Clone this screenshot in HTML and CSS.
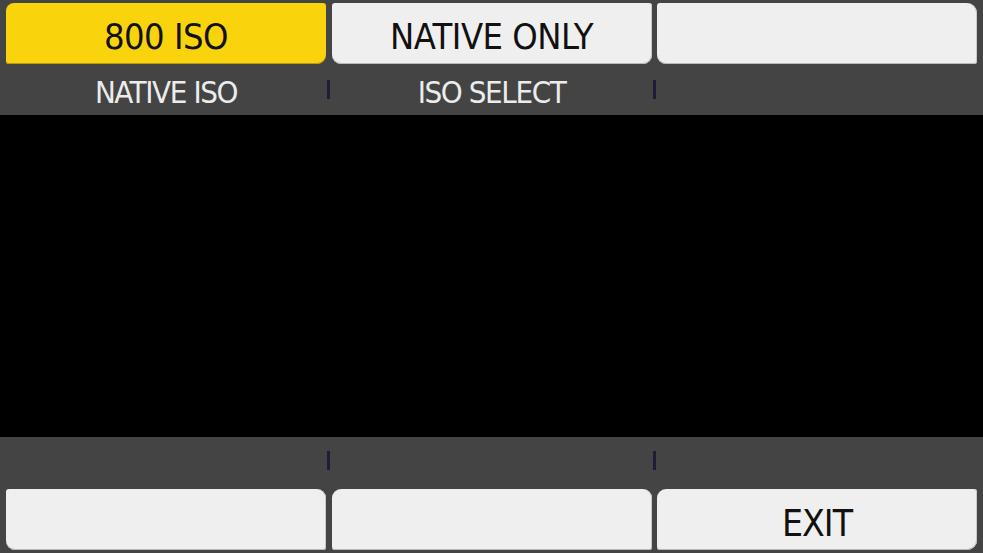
FILE: index.html
```html
<!DOCTYPE html>
<html lang="en">
  <head>
    <meta charset="UTF-8" />
    <meta name="viewport" content="width=device-width, initial-scale=1.0" />
    <title>ISO Select</title>
    <link rel="stylesheet" href="styles.css">
  </head>
  <body>
    <div class="screen">
      <!-- Top soft keys -->
      <div class="key-row top-row">
        <div class="key key-active">800 ISO</div>
        <div class="key">NATIVE ONLY</div>
        <div class="key"></div>
      </div>

      <!-- Key captions -->
      <div class="label-row">
        <div class="label">NATIVE ISO</div>
        <div class="tick"></div>
        <div class="label">ISO SELECT</div>
        <div class="tick"></div>
        <div class="label"></div>
      </div>

      <!-- Viewfinder area -->
      <div class="view"></div>

      <div class="label-row bottom-labels">
        <div class="label"></div>
        <div class="tick"></div>
        <div class="label"></div>
        <div class="tick"></div>
        <div class="label"></div>
      </div>

      <!-- Bottom soft keys -->
      <div class="key-row bottom-row">
        <div class="key"></div>
        <div class="key"></div>
        <div class="key key-exit">EXIT</div>
      </div>
    </div>
  </body>
</html>
```

FILE: styles.css
```css
body {
  margin: 0;
  background-color: #444444;
  font-family: "DejaVu Sans Condensed", "Liberation Sans Narrow", "Liberation Sans", sans-serif;
}
.screen {
  width: 983px;
  height: 553px;
  display: flex;
  flex-direction: column;
  overflow: hidden;
}
.key-row {
  display: grid;
  grid-template-columns: 1fr 1fr 1fr;
  column-gap: 5.5px;
  padding: 0 6px;
  height: 61px;
}
.top-row {
  margin-top: 2.5px;
}
.key {
  display: flex;
  align-items: center;
  justify-content: center;
  padding-top: 6px;
  box-sizing: border-box;
  background-color: #efefef;
  box-shadow: inset 0 -1px 0 #b9b9b9, inset -1px 0 0 #c9c9c9;
  color: #111;
  font-size: 36px;
  letter-spacing: -0.5px;
  border-radius: 3px;
}
.key-active {
  background-color: #f9d30c;
  box-shadow: inset 0 -1px 0 #b89c10;
}
.key-exit {
  font-size: 37px;
  letter-spacing: -1px;
  padding-top: 8px;
}

/* corner shapes of the soft keys */
.top-row .key:nth-child(1) {
  border-radius: 8px 3px 9px 3px;
}
.top-row .key:nth-child(2) {
  border-radius: 3px 3px 9px 9px;
}
.top-row .key:nth-child(3) {
  border-radius: 3px 10px 3px 9px;
}
.bottom-row .key:nth-child(1) {
  border-radius: 3px 9px 3px 9px;
}
.bottom-row .key:nth-child(2) {
  border-radius: 9px 9px 3px 3px;
}
.bottom-row .key:nth-child(3) {
  border-radius: 9px 3px 10px 3px;
}

.label-row {
  display: grid;
  grid-template-columns: 1fr 5.5px 1fr 5.5px 1fr;
  align-items: center;
  padding: 0 6px;
  height: 51px;
}
.label {
  text-align: center;
  color: #ececec;
  font-size: 31px;
  letter-spacing: -1.4px;
  padding-top: 5px;
}
.tick {
  justify-self: center;
  width: 3px;
  height: 19px;
  background-color: #1f1d36;
}
.view {
  height: 322px;
  background-color: #000;
}
.bottom-labels {
  height: 52px;
}
.bottom-labels .tick {
  margin-bottom: 4px;
}
```
